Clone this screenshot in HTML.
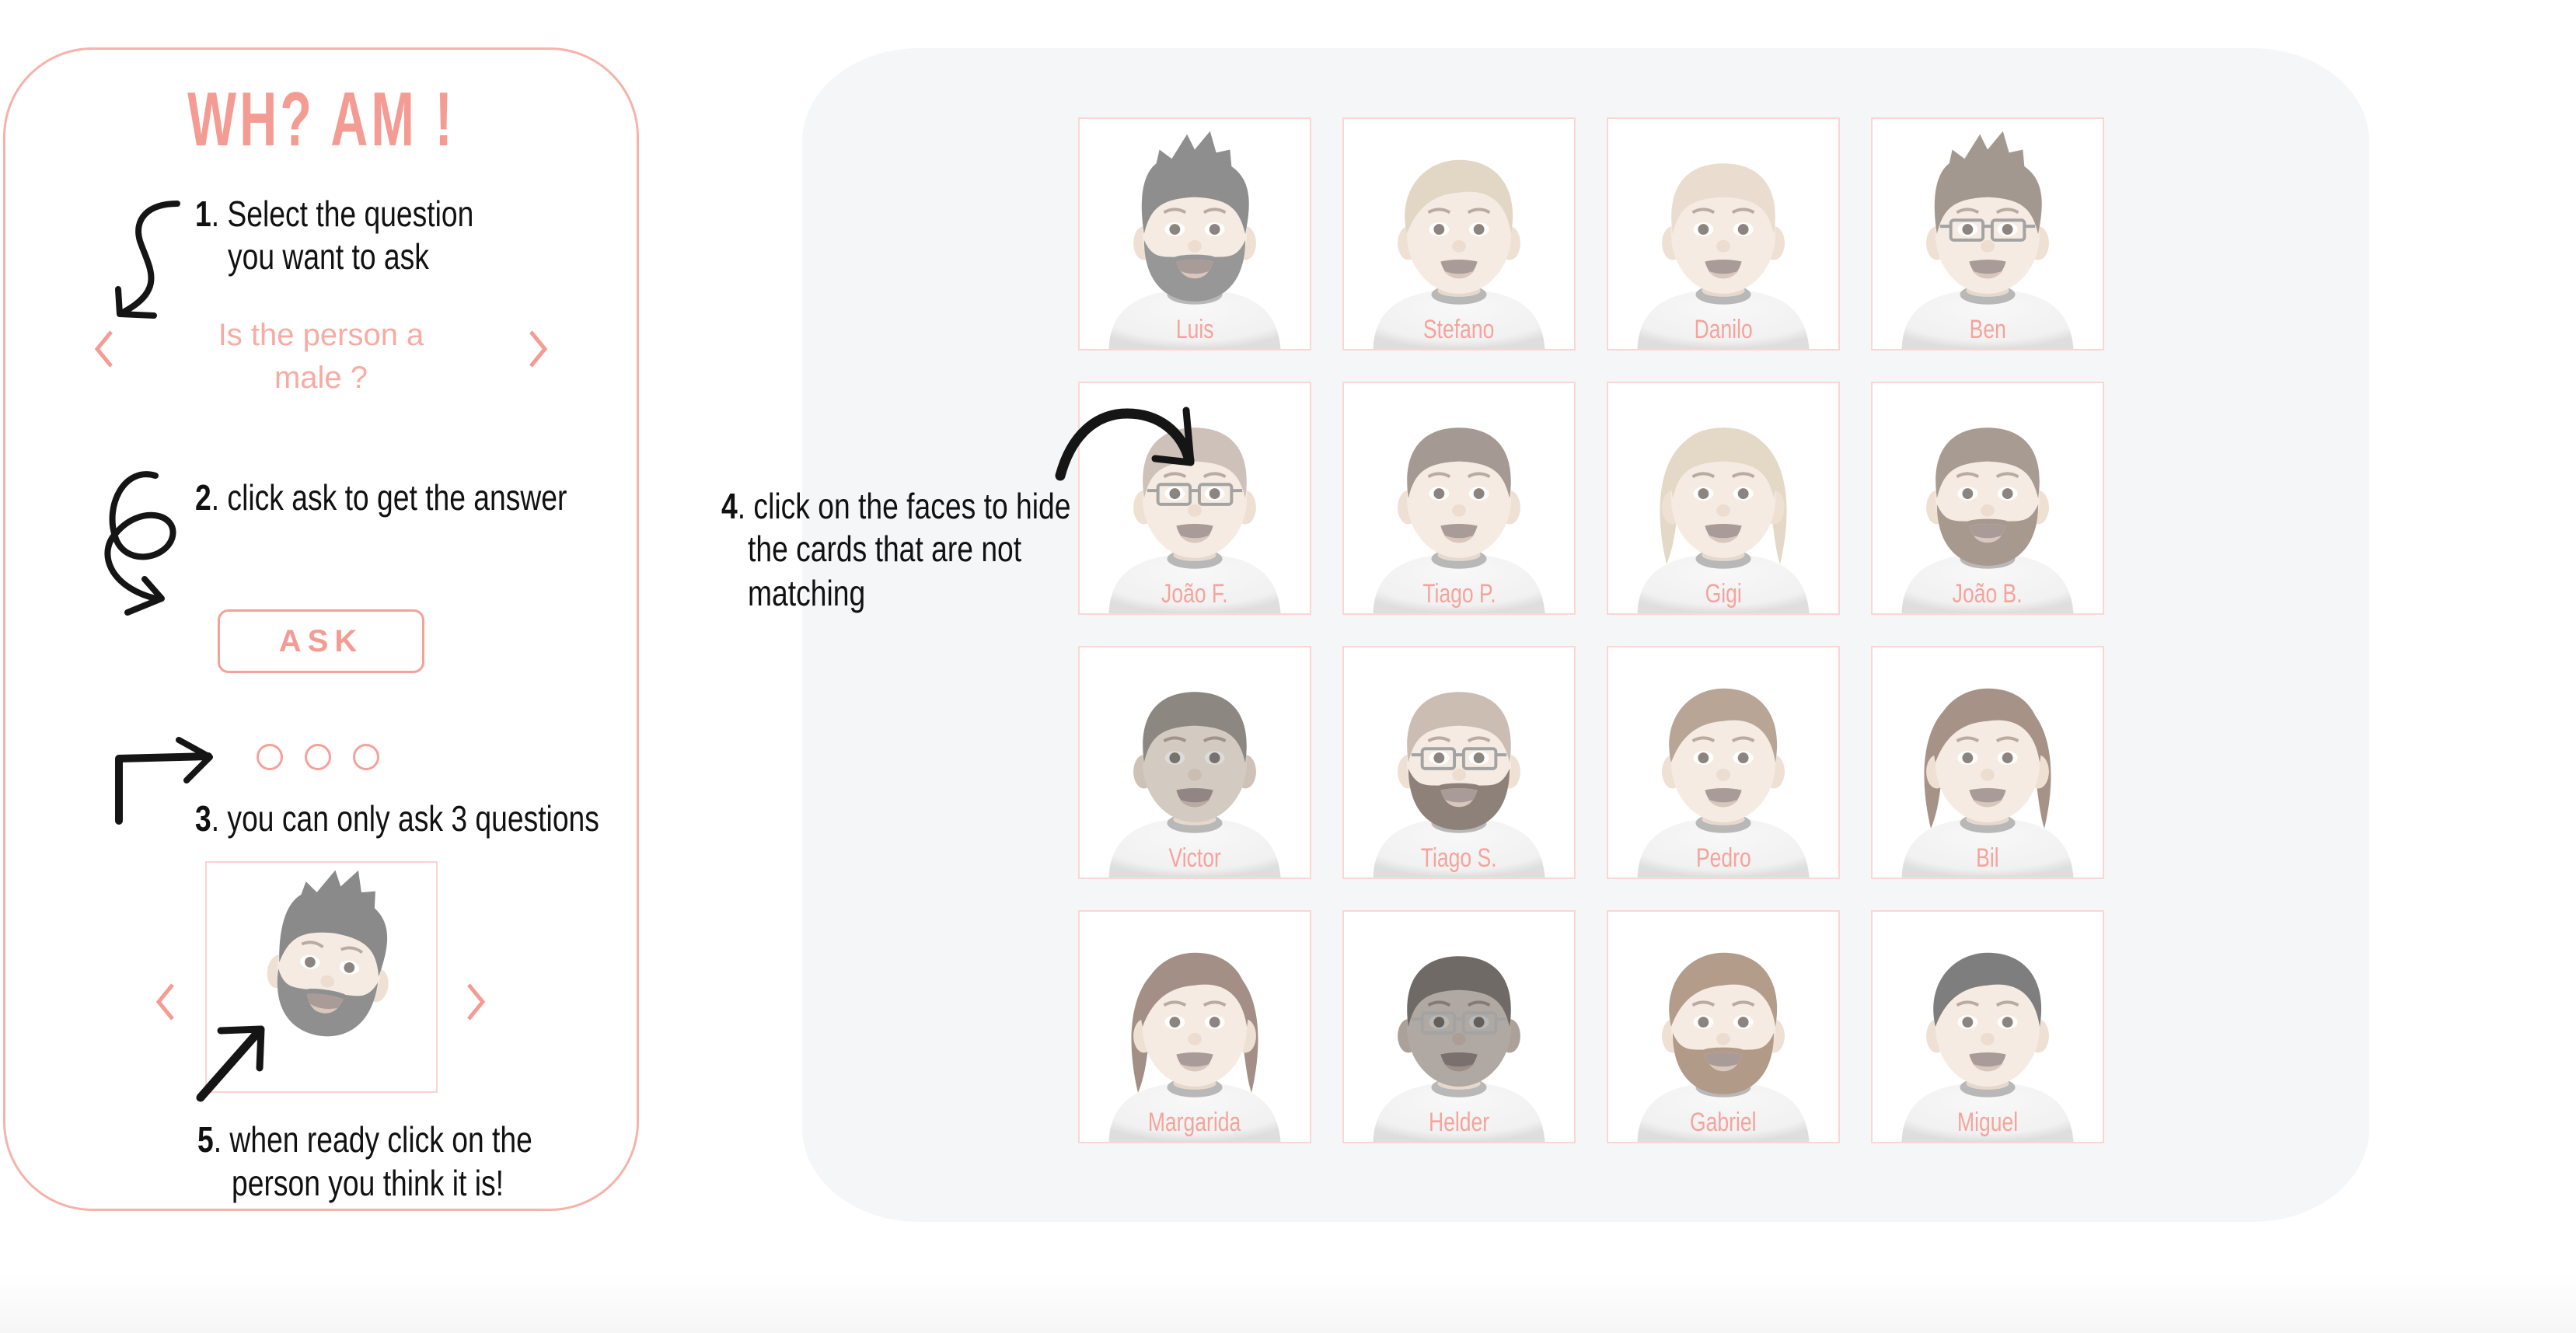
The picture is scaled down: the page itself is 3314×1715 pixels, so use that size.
<!DOCTYPE html>
<html><head><meta charset="utf-8">
<style>
*{margin:0;padding:0;box-sizing:border-box}
html,body{width:3314px;height:1715px;background:#fff;overflow:hidden;position:relative;font-family:"Liberation Sans",sans-serif}
.abs{position:absolute}
.left{left:4px;top:61px;width:818px;height:1497px;border:3px solid #f6b2ab;border-radius:115px}
.title{left:0;width:826px;top:104px;text-align:center;color:#f49c93;font-weight:bold;font-size:98px;line-height:1;letter-spacing:6px}
.title span{display:inline-block;transform:scaleX(.68)}
.t{font-size:46px;line-height:1;color:#111;white-space:nowrap;transform:scaleX(.81);transform-origin:0 0}
.t b{font-weight:bold}
.q{color:#f7aba3;font-size:40px;line-height:55px;text-align:center;width:400px;left:213px;top:404px}
.ask{left:280px;top:784px;width:266px;height:82px;border:3px solid #f4a19a;border-radius:14px;color:#f49c93;font-weight:bold;font-size:40px;text-align:center;line-height:76px;letter-spacing:8px}
.dot{width:34px;height:34px;border:3.5px solid #f4a19a;border-radius:50%;top:957px}
.panel{left:1032px;top:62px;width:2016px;height:1510px;background:#f5f6f8;border-radius:150px/120px}
.card{width:300px;height:300px;background:#fff;border:2px solid #fbd7d4;overflow:hidden}
.card svg{position:absolute;left:0;top:0}
.nm{position:absolute;left:0;width:296px;top:254px;text-align:center;color:#f4a49c;font-size:34px;line-height:1}
.nm span{display:inline-block;transform:scaleX(.78)}
.shadow{left:0;top:1560px;width:3314px;height:155px;background:linear-gradient(#fff,#fff 50%,#f6f6f6)}
</style></head><body>
<svg width="0" height="0" style="position:absolute">
<defs>
<radialGradient id="tg" cx="50%" cy="30%" r="70%"><stop offset="0" stop-color="#f8f8f8"/><stop offset=".8" stop-color="#f1f1f1"/><stop offset="1" stop-color="#dedede"/></radialGradient>
<symbol id="body" viewBox="0 0 300 300">
<path d="M38 300 C40 250 72 230 120 224 L180 224 C228 230 258 250 262 300 Z" fill="url(#tg)"/>
<rect x="122" y="196" width="56" height="34" fill="#eadcd0"/>
<ellipse cx="150" cy="229" rx="36" ry="13" fill="#b8b8b8"/>
<ellipse cx="150" cy="224" rx="28" ry="8" fill="#e6d8cc"/>
</symbol>
<symbol id="face" viewBox="0 0 300 300">
<ellipse cx="84" cy="162" rx="14" ry="22" fill="#efe0d4"/>
<ellipse cx="216" cy="162" rx="14" ry="22" fill="#efe0d4"/>
<ellipse cx="150" cy="150" rx="68" ry="78" fill="#f5ebe2"/>
<path d="M110 122 Q124 114 138 122" stroke="#b9aba2" stroke-width="4" fill="none"/>
<path d="M162 122 Q176 114 190 122" stroke="#b9aba2" stroke-width="4" fill="none"/>
<ellipse cx="124" cy="144" rx="13" ry="9" fill="#fff"/><circle cx="124" cy="144" r="7" fill="#8c8480"/>
<ellipse cx="176" cy="144" rx="13" ry="9" fill="#fff"/><circle cx="176" cy="144" r="7" fill="#8c8480"/>
<ellipse cx="150" cy="166" rx="9" ry="8" fill="#eddcd0"/>
<path d="M126 186 Q150 181 174 186 Q168 208 150 208 Q132 208 126 186Z" fill="#a99c98"/>
<path d="M130 198 Q150 206 170 198 Q162 208 150 208 Q138 208 130 198Z" fill="#d9c6bd"/>
</symbol>
<symbol id="beard" viewBox="0 0 300 300"><path d="M84 158 C84 218 118 238 150 238 C182 238 216 218 216 158 C206 180 196 180 176 180 C168 176 132 176 124 180 C104 180 94 180 84 158Z M126 186 Q150 181 174 186 Q168 208 150 208 Q132 208 126 186Z" fill-rule="evenodd"/></symbol>
<symbol id="glasses" viewBox="0 0 300 300"><g fill="none" stroke="#a3a3a3" stroke-width="4"><rect x="102" y="132" width="42" height="26" rx="4"/><rect x="156" y="132" width="42" height="26" rx="4"/><path d="M144 140 H156 M102 140 H88 M198 140 H212"/></g></symbol>
<symbol id="short" viewBox="0 0 300 300"><path d="M84 150 C74 80 110 58 150 58 C190 58 226 80 216 150 C208 118 196 104 150 102 C104 104 92 118 84 150Z"/></symbol>
<symbol id="spiky" viewBox="0 0 300 300"><path d="M84 150 C76 100 84 70 100 58 L104 40 L120 52 L140 20 L150 40 L170 16 L178 44 L196 40 L198 62 C224 80 224 110 216 150 C208 118 196 104 150 102 C104 104 92 118 84 150Z"/></symbol>
<symbol id="long" viewBox="0 0 300 300"><path d="M76 236 C58 160 62 62 150 58 C238 62 242 160 224 236 C212 200 214 120 190 106 C150 110 116 110 100 120 C88 150 92 200 76 236Z"/></symbol>
<symbol id="side" viewBox="0 0 300 300"><path d="M82 150 C68 90 110 48 160 54 C200 58 228 90 218 150 C212 110 190 90 150 96 C120 98 96 112 82 150Z"/></symbol>
<symbol id="chevL" viewBox="0 0 30 50"><path d="M24 3 L6 25 L24 47" fill="none" stroke="#f49c93" stroke-width="5"/></symbol>
<symbol id="chevR" viewBox="0 0 30 50"><path d="M6 3 L24 25 L6 47" fill="none" stroke="#f49c93" stroke-width="5"/></symbol>
</defs></svg>

<div class="abs shadow"></div>
<div class="abs left"></div>
<div class="abs title"><span>WH? AM !</span></div>

<div class="abs t" style="left:251px;top:252px"><b>1</b>. Select the question</div>
<div class="abs t" style="left:293px;top:307px">you want to ask</div>
<div class="abs q">Is the person a<br>male ?</div>
<svg class="abs" style="left:119px;top:424px" width="30" height="50"><use href="#chevL" width="30" height="50"/></svg>
<svg class="abs" style="left:677px;top:424px" width="30" height="50"><use href="#chevR" width="30" height="50"/></svg>
<div class="abs t" style="left:251px;top:617px"><b>2</b>. click ask to get the answer</div>
<div class="abs ask">ASK</div>
<div class="abs dot" style="left:330px"></div>
<div class="abs dot" style="left:392px"></div>
<div class="abs dot" style="left:454px"></div>
<div class="abs t" style="left:251px;top:1030px"><b>3</b>. you can only ask 3 questions</div>
<div class="abs" style="left:264px;top:1108px;width:299px;height:298px;border:2px solid #fad3cf;background:#fff">
<svg width="295" height="294" viewBox="0 0 300 300">
<g transform="translate(10,-10) rotate(8 150 150)">
<use href="#face" width="300" height="300"/>
<use href="#beard" width="300" height="300" fill="#8f8f8f"/>
<use href="#spiky" width="300" height="300" fill="#8a8a8a"/>
</g></svg></div>
<svg class="abs" style="left:198px;top:1264px" width="30" height="50"><use href="#chevL" width="30" height="50"/></svg>
<svg class="abs" style="left:597px;top:1264px" width="30" height="50"><use href="#chevR" width="30" height="50"/></svg>
<div class="abs t" style="left:254px;top:1443px"><b>5</b>. when ready click on the</div>
<div class="abs t" style="left:298px;top:1499px">person you think it is!</div>

<svg class="abs" style="left:0;top:0" width="900" height="1600" viewBox="0 0 900 1600" fill="none" stroke="#151515" stroke-linecap="round" stroke-linejoin="round">
<path d="M228 262 C190 262 172 282 180 310 C192 345 214 372 158 402" stroke-width="8"/>
<path d="M152 372 L154 404 L198 406" stroke-width="8"/>
<path d="M200 612 C160 600 135 650 148 690 C160 730 215 720 222 690 C228 660 180 650 150 685 C125 710 140 755 200 770" stroke-width="8"/>
<path d="M186 745 L208 770 L164 788" stroke-width="8"/>
<path d="M153 1056 L153 976 L268 973" stroke-width="10"/>
<path d="M230 952 L270 974 L240 1004" stroke-width="8"/>
<path d="M258 1412 L332 1328" stroke-width="11"/>
<path d="M284 1326 L336 1324 L334 1374" stroke-width="9"/>
</svg>

<div class="abs panel"></div>
<div class="abs t" style="left:928px;top:628px"><b>4</b>. click on the faces to hide</div>
<div class="abs t" style="left:962px;top:683px">the cards that are not</div>
<div class="abs t" style="left:962px;top:740px">matching</div>

<div class="abs card" style="left:1387px;top:151px"><svg width="296" height="296" viewBox="0 0 300 300"><use href="#body" width="300" height="300"/><use href="#face" width="300" height="300"/><use href="#beard" width="300" height="300" fill="#979797"/><use href="#spiky" width="300" height="300" fill="#8e8e8e"/></svg><div class="nm"><span>Luis</span></div></div>
<div class="abs card" style="left:1727px;top:151px"><svg width="296" height="296" viewBox="0 0 300 300"><use href="#body" width="300" height="300"/><use href="#face" width="300" height="300"/><use href="#side" width="300" height="300" fill="#e2d6c4"/></svg><div class="nm"><span>Stefano</span></div></div>
<div class="abs card" style="left:2067px;top:151px"><svg width="296" height="296" viewBox="0 0 300 300"><use href="#body" width="300" height="300"/><use href="#face" width="300" height="300"/><use href="#short" width="300" height="300" fill="#eadccf"/></svg><div class="nm"><span>Danilo</span></div></div>
<div class="abs card" style="left:2407px;top:151px"><svg width="296" height="296" viewBox="0 0 300 300"><use href="#body" width="300" height="300"/><use href="#face" width="300" height="300"/><use href="#glasses" width="300" height="300"/><use href="#spiky" width="300" height="300" fill="#a39890"/></svg><div class="nm"><span>Ben</span></div></div>

<div class="abs card" style="left:1387px;top:491px"><svg width="296" height="296" viewBox="0 0 300 300"><use href="#body" width="300" height="300"/><use href="#face" width="300" height="300"/><use href="#glasses" width="300" height="300"/><use href="#short" width="300" height="300" fill="#cdc1b9"/></svg><div class="nm"><span>João F.</span></div></div>
<div class="abs card" style="left:1727px;top:491px"><svg width="296" height="296" viewBox="0 0 300 300"><use href="#body" width="300" height="300"/><use href="#face" width="300" height="300"/><use href="#short" width="300" height="300" fill="#a59a93"/></svg><div class="nm"><span>Tiago P.</span></div></div>
<div class="abs card" style="left:2067px;top:491px"><svg width="296" height="296" viewBox="0 0 300 300"><use href="#long" width="300" height="300" fill="#e4d8c6"/><use href="#body" width="300" height="300"/><use href="#face" width="300" height="300"/><use href="#short" width="300" height="300" fill="#e4d8c6"/></svg><div class="nm"><span>Gigi</span></div></div>
<div class="abs card" style="left:2407px;top:491px"><svg width="296" height="296" viewBox="0 0 300 300"><use href="#body" width="300" height="300"/><use href="#face" width="300" height="300"/><use href="#beard" width="300" height="300" fill="#a8998f"/><use href="#short" width="300" height="300" fill="#a89b92"/></svg><div class="nm"><span>João B.</span></div></div>

<div class="abs card" style="left:1387px;top:831px"><svg width="296" height="296" viewBox="0 0 300 300"><use href="#body" width="300" height="300"/><g style="filter:brightness(.86)"><use href="#face" width="300" height="300"/></g><use href="#short" width="300" height="300" fill="#8d8782"/></svg><div class="nm"><span>Victor</span></div></div>
<div class="abs card" style="left:1727px;top:831px"><svg width="296" height="296" viewBox="0 0 300 300"><use href="#body" width="300" height="300"/><use href="#face" width="300" height="300"/><use href="#beard" width="300" height="300" fill="#8e8179"/><use href="#glasses" width="300" height="300"/><use href="#short" width="300" height="300" fill="#cbbdb2"/></svg><div class="nm"><span>Tiago S.</span></div></div>
<div class="abs card" style="left:2067px;top:831px"><svg width="296" height="296" viewBox="0 0 300 300"><use href="#body" width="300" height="300"/><use href="#face" width="300" height="300"/><use href="#side" width="300" height="300" fill="#b8a596"/></svg><div class="nm"><span>Pedro</span></div></div>
<div class="abs card" style="left:2407px;top:831px"><svg width="296" height="296" viewBox="0 0 300 300"><use href="#long" width="300" height="300" fill="#a79288"/><use href="#body" width="300" height="300"/><use href="#face" width="300" height="300"/><use href="#side" width="300" height="300" fill="#a79288"/></svg><div class="nm"><span>Bil</span></div></div>

<div class="abs card" style="left:1387px;top:1171px"><svg width="296" height="296" viewBox="0 0 300 300"><use href="#long" width="300" height="300" fill="#a38f86"/><use href="#body" width="300" height="300"/><use href="#face" width="300" height="300"/><use href="#side" width="300" height="300" fill="#a38f86"/></svg><div class="nm"><span>Margarida</span></div></div>
<div class="abs card" style="left:1727px;top:1171px"><svg width="296" height="296" viewBox="0 0 300 300"><use href="#body" width="300" height="300"/><g style="filter:brightness(.72)"><use href="#face" width="300" height="300"/></g><use href="#glasses" width="300" height="300"/><use href="#short" width="300" height="300" fill="#6f6a66"/></svg><div class="nm"><span>Helder</span></div></div>
<div class="abs card" style="left:2067px;top:1171px"><svg width="296" height="296" viewBox="0 0 300 300"><use href="#body" width="300" height="300"/><use href="#face" width="300" height="300"/><use href="#beard" width="300" height="300" fill="#b29a88"/><use href="#side" width="300" height="300" fill="#b49c8a"/></svg><div class="nm"><span>Gabriel</span></div></div>
<div class="abs card" style="left:2407px;top:1171px"><svg width="296" height="296" viewBox="0 0 300 300"><use href="#body" width="300" height="300"/><use href="#face" width="300" height="300"/><use href="#side" width="300" height="300" fill="#7e7e7e"/></svg><div class="nm"><span>Miguel</span></div></div>

<svg class="abs" style="left:1340px;top:500px" width="220" height="140" viewBox="1340 500 220 140" fill="none" stroke="#151515" stroke-linecap="round" stroke-linejoin="round">
<path d="M1364 612 C1378 560 1410 532 1450 532 C1490 532 1520 555 1530 592" stroke-width="13"/>
<path d="M1526 528 L1532 595 L1486 590" stroke-width="9"/>
</svg>
</body></html>
